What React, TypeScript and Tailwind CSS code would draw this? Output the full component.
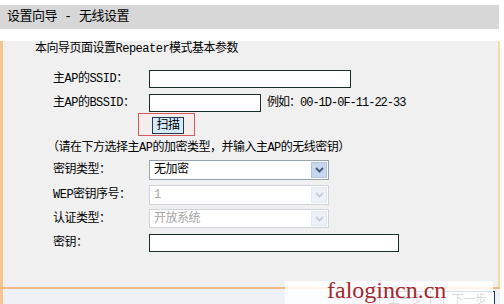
const font = { fontFamily: "'Liberation Mono', 'Noto Sans CJK SC', monospace" };

function Label({ children }: { children: React.ReactNode }) {
  return <div className="w-[96px] shrink-0 text-[12px] leading-none text-black">{children}</div>;
}

function Chevron({ color }: { color: string }) {
  return (
    <svg width="9" height="6" viewBox="0 0 9 6">
      <path d="M1 1 L4.5 4.5 L8 1" fill="none" stroke={color} strokeWidth="2" />
    </svg>
  );
}

function Select({ value, disabled, height }: { value: string; disabled?: boolean; height: string }) {
  return (
    <div
      className={`${height} w-[180px] flex items-center border bg-white ${
        disabled ? "border-[#cfd4da]" : "border-[#9aa3ad]"
      }`}
    >
      <span className={`pl-[4px] text-[12px] leading-none ${disabled ? "text-[#a6a6a6]" : "text-black"}`}>{value}</span>
      <div
        className={`ml-auto mr-[1px] h-[calc(100%-2px)] w-[16px] flex items-center justify-center border ${
          disabled ? "border-[#e3e9f1] bg-[#edf2f8]" : "border-[#b5c4dc] bg-[#c6d6ee]"
        }`}
      >
        <Chevron color={disabled ? "#c6cfdc" : "#4a5d80"} />
      </div>
    </div>
  );
}

export default function App() {
  return (
    <div className="relative w-[504px] h-[304px] overflow-hidden bg-white tracking-[-0.5px]" style={font}>
      <div className="pt-[5px]">
        {/* title bar */}
        <div className="h-[24px] w-[499px] bg-[#d7d7d7] pl-[7px] flex items-center text-[13px] text-black">
          设置向导 - 无线设置
        </div>

        {/* body */}
        <div className="h-[246px] w-[500px] border-l-[3px] border-l-[#f6c48e] border-r-[2px] border-r-[#f2dfa8] bg-[#f0f0f0]">
          <div className="mt-[12px] h-[16px] pl-[32px] flex items-center text-[12px] text-black">
            本向导页面设置Repeater模式基本参数
          </div>

          <div className="mt-[13px] flex items-center pl-[50px]">
            <Label>主AP的SSID：</Label>
            <div className="h-[18px] w-[202px] border border-[#1b2f2a] bg-white" />
          </div>

          <div className="mt-[6px] flex items-center pl-[50px]">
            <Label>主AP的BSSID：</Label>
            <div className="h-[18px] w-[112px] border border-[#1b2f2a] bg-white" />
            <span className="ml-[6px] text-[12px] leading-none tracking-[-1px] text-black">例如：00-1D-0F-11-22-33</span>
          </div>

          <div className="mt-[1px] pl-[135px]">
            <div className="h-[23px] w-[57px] border border-[#d65a5a] bg-[#f3eded] pl-[13px] pt-[3px]">
              <div className="h-[17px] w-[32px] border border-[#28384a] bg-[#d3ebf9] flex items-center justify-center text-[12px] leading-none text-black">
                扫描
              </div>
            </div>
          </div>

          <div className="mt-[4px] h-[16px] pl-[44px] flex items-center text-[12px] text-black">
            （请在下方选择主AP的加密类型，并输入主AP的无线密钥）
          </div>

          <div className="mt-[4px] flex items-center pl-[50px]">
            <Label>密钥类型：</Label>
            <Select value="无加密" height="h-[20px]" />
          </div>

          <div className="mt-[5px] flex items-center pl-[50px]">
            <Label>WEP密钥序号：</Label>
            <Select value="1" disabled height="h-[20px]" />
          </div>

          <div className="mt-[4px] flex items-center pl-[50px]">
            <Label>认证类型：</Label>
            <Select value="开放系统" disabled height="h-[19px]" />
          </div>

          <div className="mt-[6px] flex items-center pl-[50px]">
            <Label>密钥：</Label>
            <div className="h-[18px] w-[250px] border border-[#1b2f2a] bg-white" />
          </div>
        </div>

        {/* footer strip */}
        <div className="h-[2px] w-[500px] bg-[#f2b980]" />
        <div className="h-[23px] w-[500px] border-l-[3px] border-l-[#f6c48e] bg-[#eef1f6] flex items-center justify-end gap-[12px] pr-[5px]">
          <div className="h-[19px] w-[52px] border border-[#1f3a4f] bg-[#f4f6fa] flex items-center justify-center text-[12px] leading-none">
            上一步
          </div>
          <div className="h-[19px] w-[52px] border border-[#1f3a4f] bg-[#f4f6fa] flex items-center justify-center text-[12px] leading-none">
            下一步
          </div>
        </div>
        <div className="h-[2px] w-[500px] bg-[#f2c190]" />
      </div>

      {/* watermark */}
      <div className="absolute left-[285px] top-[281px] h-[23px] w-[208px] bg-white/85" />
      <div
        className="absolute left-[327px] top-[275px] text-[24px] leading-[30px] tracking-normal text-[#a5272f]"
        style={{ fontFamily: "'Liberation Serif', serif" }}
      >
        falogincn.cn
      </div>
    </div>
  );
}
